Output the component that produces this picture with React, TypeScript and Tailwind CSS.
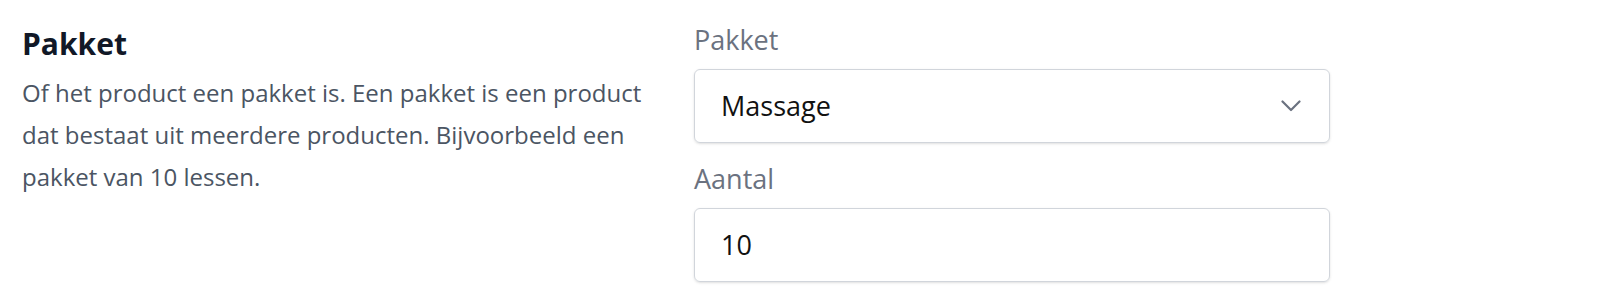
const font = { fontFamily: '"Open Sans", "Noto Sans", sans-serif' };

export default function App() {
    return (
        <div className="w-[1600px] h-[303px] bg-white flex pl-[22px] pt-[24px]" style={font}>
            <div className="w-[640px]">
                <h2 className="text-[30px] leading-[40px] font-bold text-[#111827]">Pakket</h2>
                <p className="mt-[8px] text-[24px] leading-[42px] text-[#4b5563]">
                    Of het product een pakket is. Een pakket is een product dat bestaat uit meerdere producten. Bijvoorbeeld een pakket van 10 lessen.
                </p>
            </div>

            <div className="ml-[32px] w-[636px] flex flex-col -mt-[2px]">
                <label className="text-[27px] leading-[36px] text-[#6b7280]">Pakket</label>
                <div className="mt-[11px] h-[74px] border border-[#d1d5db] rounded-[6px] shadow-sm pl-[26px] pr-[28px] flex items-center justify-between text-[27px] text-[#111111]">
                    <span>Massage</span>
                    <svg width="20" height="12" viewBox="0 0 20 12" fill="none" className="text-[#6b7280]">
                        <path d="M1.5 1.5L10 10L18.5 1.5" stroke="currentColor" strokeWidth="2.2" strokeLinecap="round" strokeLinejoin="round" />
                    </svg>
                </div>
                <label className="mt-[18px] text-[27px] leading-[36px] text-[#6b7280]">Aantal</label>
                <div className="mt-[11px] h-[74px] border border-[#d1d5db] rounded-[6px] shadow-sm px-[26px] flex items-center text-[27px] text-[#111111]">
                    10
                </div>
            </div>
        </div>
    );
}
